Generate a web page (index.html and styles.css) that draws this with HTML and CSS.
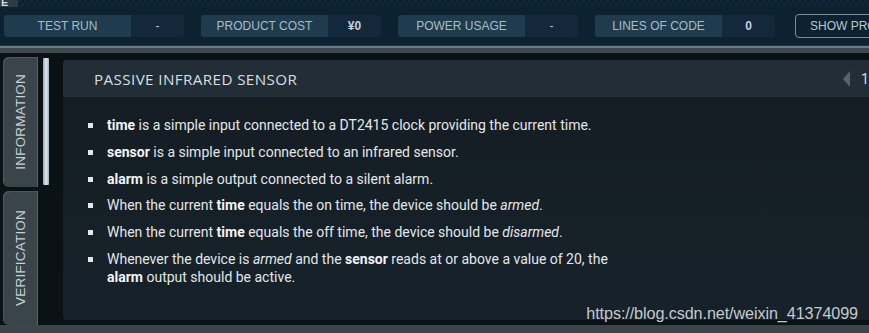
FILE: index.html
```html
<!DOCTYPE html>
<html>
<head>
<meta charset="utf-8">
<link rel="stylesheet" href="styles.css">
</head>
<body>
<div class="topstrip"><span class="corner">E</span></div>
<div class="statusbar">
  <div class="pill"><span class="plabel">TEST RUN</span><span class="pvalue">-</span></div>
  <div class="pill"><span class="plabel">PRODUCT COST</span><span class="pvalue bold">¥0</span></div>
  <div class="pill"><span class="plabel">POWER USAGE</span><span class="pvalue">-</span></div>
  <div class="pill"><span class="plabel">LINES OF CODE</span><span class="pvalue bold">0</span></div>
  <div class="showbtn">SHOW PROGRAM</div>
</div>
<div class="separator"></div>
<div class="main">
  <div class="tabs">
    <div class="tab tab-info"><span class="tabtext">INFORMATION</span></div>
    <div class="tab tab-verif"><span class="tabtext">VERIFICATION</span></div>
  </div>
  <div class="scroll"><div class="thumb"></div></div>
  <div class="panel">
    <div class="phead">
      <span class="ptitle">PASSIVE INFRARED SENSOR</span>
      <span class="pager"><span class="arrow"></span><span class="pnum">1/</span></span>
    </div>
    <ul class="list">
      <li><b>time</b> is a simple input connected to a DT2415 clock providing the current time.</li>
      <li><b>sensor</b> is a simple input connected to an infrared sensor.</li>
      <li><b>alarm</b> is a simple output connected to a silent alarm.</li>
      <li>When the current <b>time</b> equals the on time, the device should be <i>armed</i>.</li>
      <li>When the current <b>time</b> equals the off time, the device should be <i>disarmed</i>.</li>
      <li>Whenever the device is <i>armed</i> and the <b>sensor</b> reads at or above a value of 20, the<br><b>alarm</b> output should be active.</li>
    </ul>
    <div class="watermark">https://blog.csdn.net/weixin_41374099</div>
  </div>
</div>
<div class="bottombar"></div>
</body>
</html>
```
FILE: styles.css
```css
html, body {
  margin: 0;
  padding: 0;
}
body {
  width: 869px;
  height: 333px;
  overflow: hidden;
  background: #0b1418;
  font-family: "Liberation Sans", Arial, sans-serif;
}
.topstrip {
  height: 7px;
  background-color: #10283a;
  background-image:
    linear-gradient(45deg, #0c1f2c 25%, transparent 25%, transparent 75%, #0c1f2c 75%),
    linear-gradient(45deg, #0c1f2c 25%, transparent 25%, transparent 75%, #0c1f2c 75%);
  background-size: 6px 6px;
  background-position: 0 0, 3px 3px;
  display: flex;
}
.corner {
  width: 17px;
  height: 7px;
  background: #2c3a42;
  color: #cfd8dc;
  font-size: 11px;
  line-height: 4px;
  font-weight: bold;
  overflow: hidden;
  padding-left: 1px;
}
.statusbar {
  height: 38px;
  background: #0d2231;
  display: flex;
  align-items: center;
  padding-left: 4px;
  gap: 17px;
}
.pill {
  width: 180px;
  height: 22px;
  border-radius: 3px;
  display: flex;
  overflow: hidden;
  background: #13283a;
  flex: none;
}
.plabel {
  width: 127px;
  background: #1f3b4e;
  color: #a9bcc6;
  font-size: 12px;
  line-height: 22px;
  text-align: center;
}
.pvalue {
  flex: 1;
  color: #b5c4cc;
  font-size: 12px;
  line-height: 22px;
  text-align: center;
}
.pvalue.bold {
  font-weight: bold;
  color: #c4d0d6;
}
.showbtn {
  margin-left: 3px;
  height: 22px;
  padding: 0 14px;
  border: 1px solid #7c8c94;
  border-radius: 4px;
  color: #b8c6cd;
  font-size: 12px;
  line-height: 22px;
  white-space: nowrap;
  flex: none;
}
.separator {
  height: 8px;
  background: linear-gradient(#1d3340 0, #1d3340 1px, #6c7a80 1px, #6c7a80 3px, #3f4a4f 3px, #3f4a4f 8px);
}
.main {
  height: 272px;
  display: flex;
  background: #0a1216;
}
.tabs {
  width: 35px;
  margin-left: 3px;
  padding-top: 4px;
  display: flex;
  flex-direction: column;
  gap: 4px;
}
.tab {
  background: #39454b;
  border-radius: 6px 0 0 6px;
  border-right: 1px solid #55636a;
  display: flex;
  align-items: center;
  justify-content: center;
  box-shadow: inset 1px 1px 0 #4c585e;
}
.tab-info { height: 130px; }
.tab-verif { height: 134px; }
.tabtext {
  writing-mode: vertical-rl;
  transform: rotate(180deg);
  color: #c7d0d4;
  font-size: 13.5px;
  letter-spacing: 0.2px;
}
.scroll {
  width: 6px;
  margin-left: 5px;
  padding-top: 5px;
}
.thumb {
  height: 127px;
  background: linear-gradient(90deg, #8ea4b0, #dce8ee 50%, #9fb3bd);
  border-radius: 1px;
}
.panel {
  margin-left: 14px;
  margin-top: 7px;
  flex: 1;
  height: 260px;
  background: linear-gradient(#141c22, #16222a);
  border-radius: 4px 0 0 4px;
  position: relative;
}
.phead {
  height: 37px;
  background: #222e36;
  border-radius: 4px 0 0 0;
  display: flex;
  align-items: center;
  padding-left: 31px;
  overflow: hidden;
}
.ptitle {
  flex: 1;
  color: #d7dde0;
  font-family: "Open Sans", sans-serif;
  font-size: 15.2px;
  letter-spacing: 0.4px;
  font-weight: 400;
}
.pager {
  display: flex;
  align-items: center;
  width: 26px;
  gap: 11px;
}
.arrow {
  width: 0;
  height: 0;
  border-top: 8px solid transparent;
  border-bottom: 8px solid transparent;
  border-right: 7px solid #56636a;
}
.pnum {
  color: #d5dcdf;
  font-family: Roboto, sans-serif;
  font-size: 14px;
}
.list {
  margin: 0;
  padding: 19px 0 0 44px;
  list-style: none;
  font-family: Roboto, sans-serif;
  font-size: 14px;
  line-height: 18px;
  color: #e3e7e9;
}
.list li {
  position: relative;
  margin-bottom: 8.8px;
}
.list li::before {
  content: "";
  position: absolute;
  left: -19px;
  top: 7px;
  width: 5px;
  height: 5px;
  background: #e3e7e9;
}
.list b {
  font-weight: 700;
  color: #f2f4f5;
}
.watermark {
  position: absolute;
  right: 11px;
  bottom: -3px;
  line-height: 19px;
  color: #c4c9cc;
  font-family: "Liberation Sans", Arial, sans-serif;
  font-size: 16.2px;
  letter-spacing: -0.1px;
}
.bottombar {
  height: 8px;
  background: #3b464b;
}
```
